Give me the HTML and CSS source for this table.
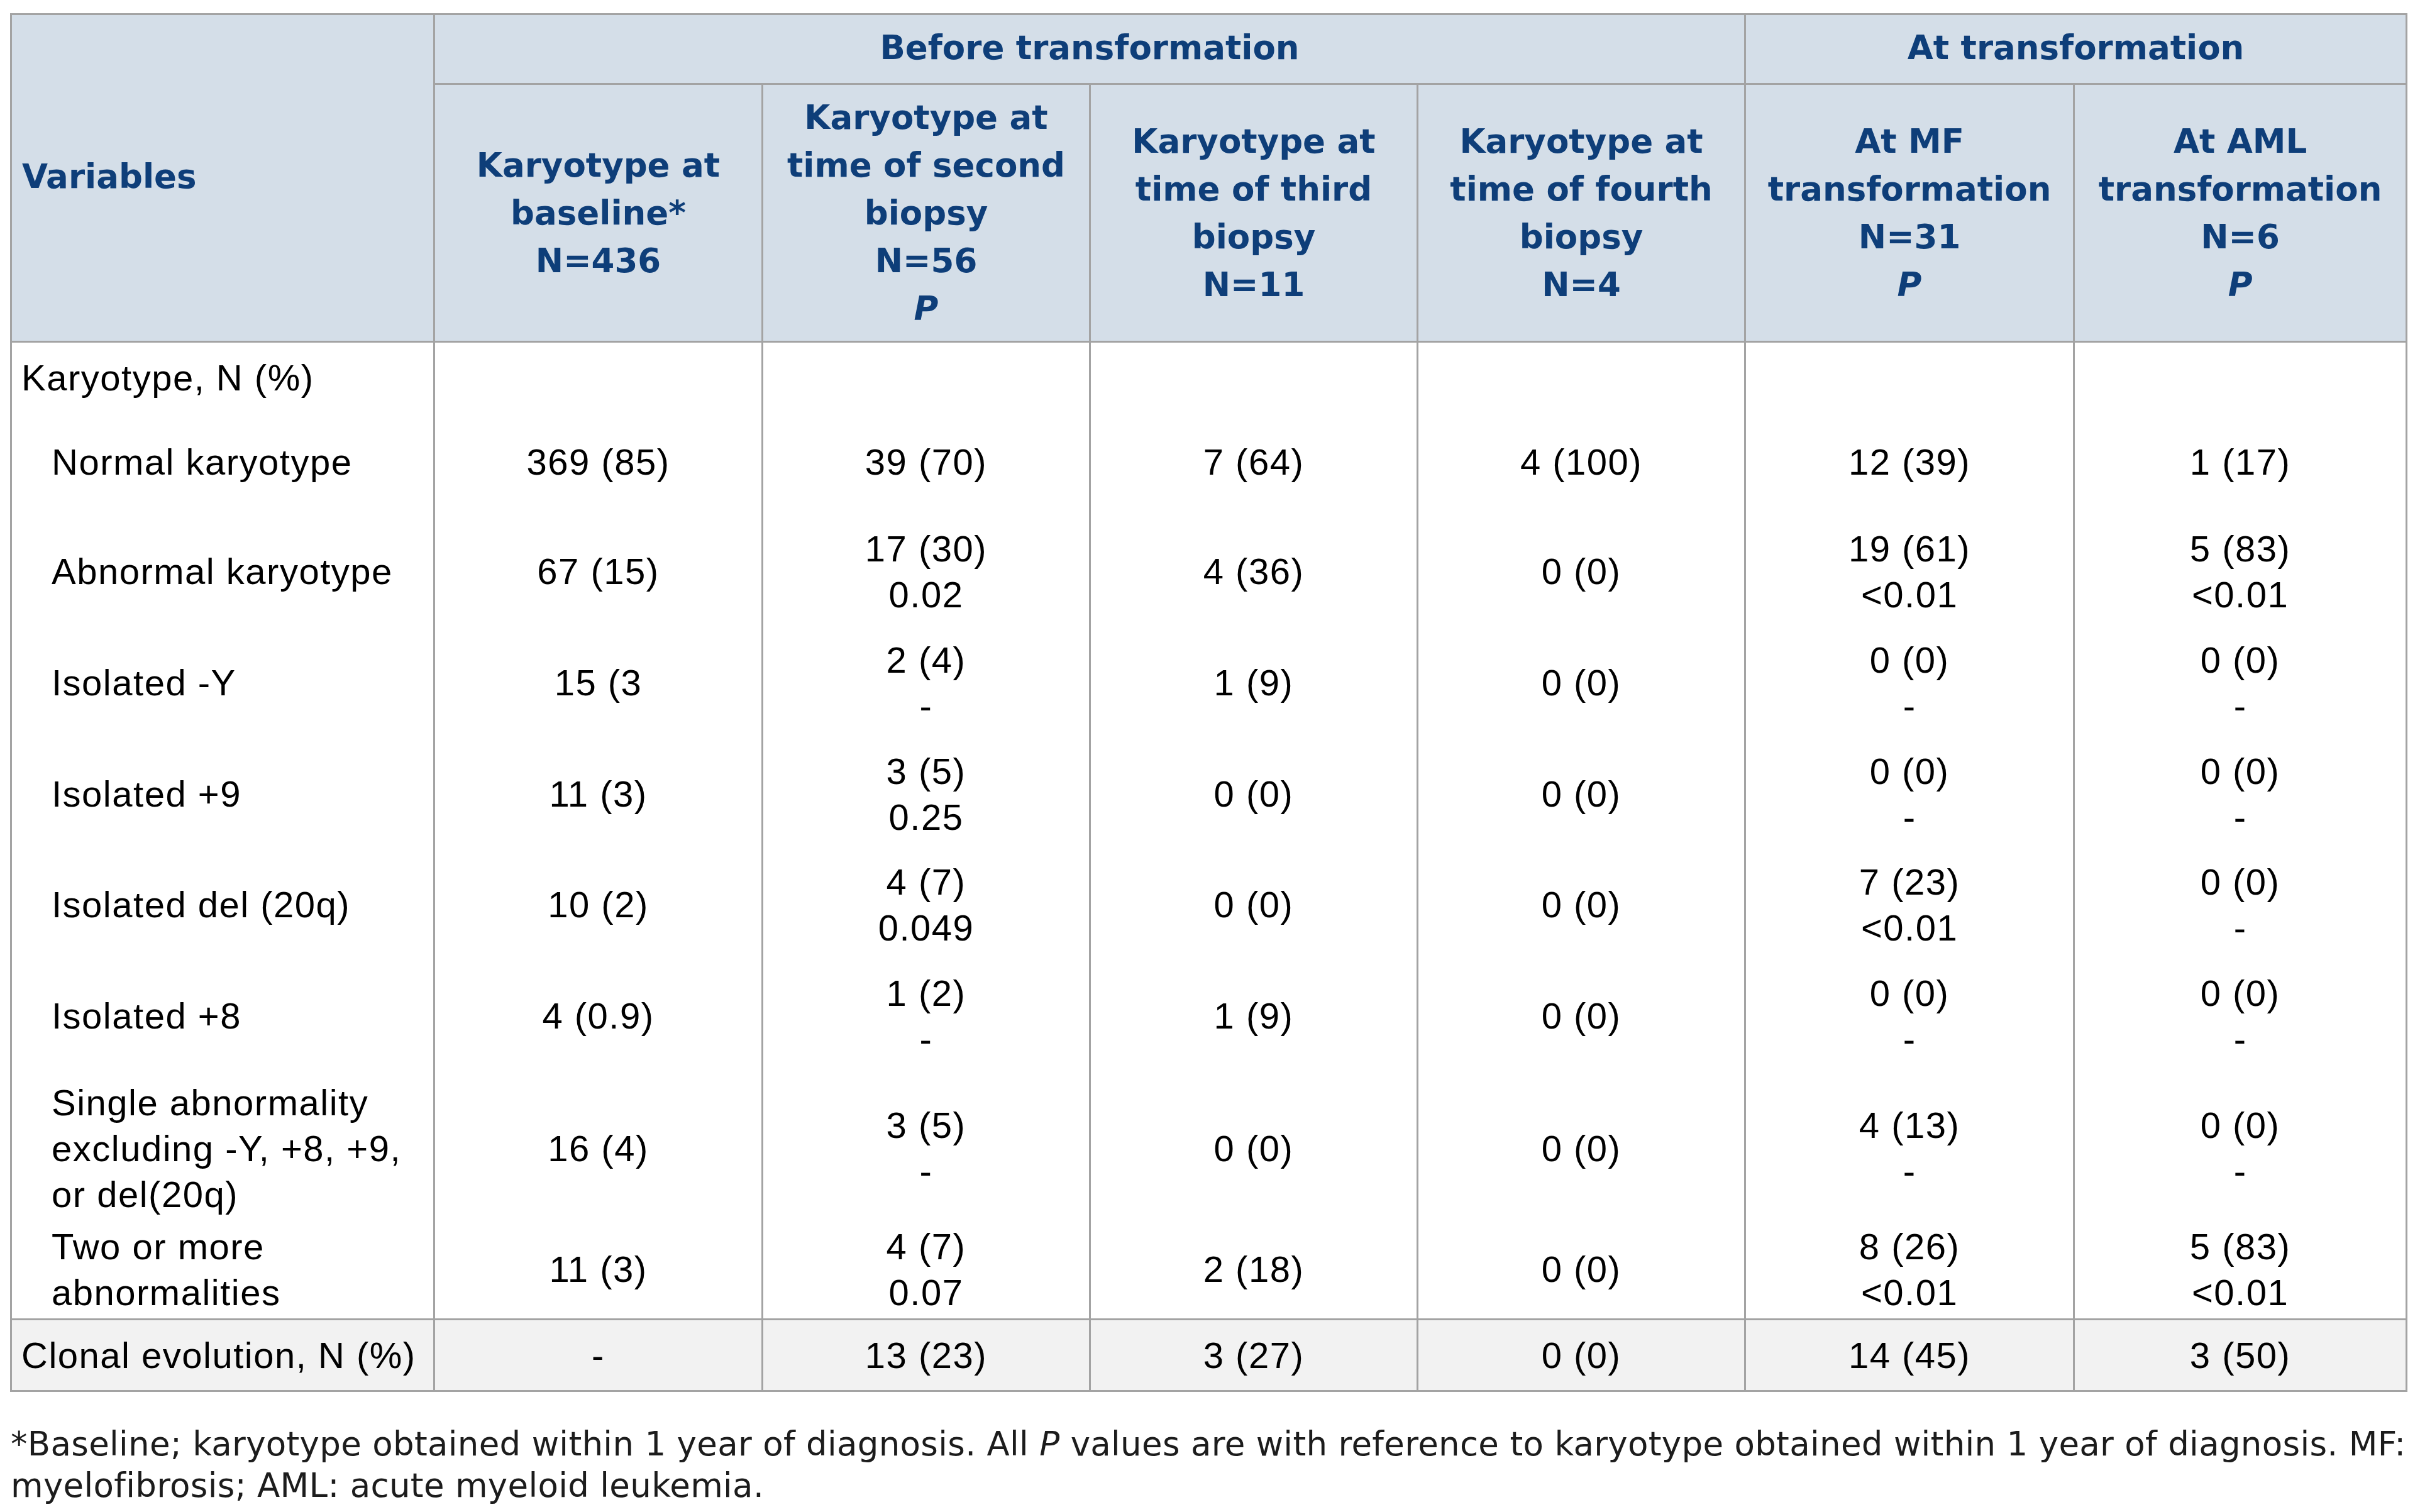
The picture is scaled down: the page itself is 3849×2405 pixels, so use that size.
FILE: index.html
```html
<!DOCTYPE html>
<html lang="en">
<head>
<meta charset="utf-8">
<title>Karyotype table</title>
<link rel="stylesheet" href="styles.css">
</head>
<body>
<div class="page">
<table class="kt">
  <colgroup>
    <col class="c0"><col class="c1"><col class="c2"><col class="c3"><col class="c4"><col class="c5"><col class="c6">
  </colgroup>
  <thead>
    <tr class="h1">
      <th rowspan="2" class="var">Variables</th>
      <th colspan="4">Before transformation</th>
      <th colspan="2">At transformation</th>
    </tr>
    <tr class="h2">
      <th>Karyotype at<br>baseline*<br>N=436</th>
      <th>Karyotype at<br>time of second<br>biopsy<br>N=56<br><i>P</i></th>
      <th>Karyotype at<br>time of third<br>biopsy<br>N=11</th>
      <th>Karyotype at<br>time of fourth<br>biopsy<br>N=4</th>
      <th>At MF<br>transformation<br>N=31<br><i>P</i></th>
      <th>At AML<br>transformation<br>N=6<br><i>P</i></th>
    </tr>
  </thead>
  <tbody>
    <tr class="r1">
      <td class="lab">Karyotype, N (%)</td><td></td><td></td><td></td><td></td><td></td><td></td>
    </tr>
    <tr class="r2">
      <td class="lab sub">Normal karyotype</td><td>369 (85)</td><td>39 (70)</td><td>7 (64)</td><td>4 (100)</td><td>12 (39)</td><td>1 (17)</td>
    </tr>
    <tr class="r3">
      <td class="lab sub">Abnormal karyotype</td><td>67 (15)</td><td>17 (30)<br>0.02</td><td>4 (36)</td><td>0 (0)</td><td>19 (61)<br>&lt;0.01</td><td>5 (83)<br>&lt;0.01</td>
    </tr>
    <tr class="r4">
      <td class="lab sub">Isolated -Y</td><td>15 (3</td><td>2 (4)<br>-</td><td>1 (9)</td><td>0 (0)</td><td>0 (0)<br>-</td><td>0 (0)<br>-</td>
    </tr>
    <tr class="r5">
      <td class="lab sub">Isolated +9</td><td>11 (3)</td><td>3 (5)<br>0.25</td><td>0 (0)</td><td>0 (0)</td><td>0 (0)<br>-</td><td>0 (0)<br>-</td>
    </tr>
    <tr class="r6">
      <td class="lab sub">Isolated del (20q)</td><td>10 (2)</td><td>4 (7)<br>0.049</td><td>0 (0)</td><td>0 (0)</td><td>7 (23)<br>&lt;0.01</td><td>0 (0)<br>-</td>
    </tr>
    <tr class="r7">
      <td class="lab sub">Isolated +8</td><td>4 (0.9)</td><td>1 (2)<br>-</td><td>1 (9)</td><td>0 (0)</td><td>0 (0)<br>-</td><td>0 (0)<br>-</td>
    </tr>
    <tr class="r8">
      <td class="lab sub">Single abnormality<br>excluding -Y, +8, +9,<br>or del(20q)</td><td>16 (4)</td><td>3 (5)<br>-</td><td>0 (0)</td><td>0 (0)</td><td>4 (13)<br>-</td><td>0 (0)<br>-</td>
    </tr>
    <tr class="r9">
      <td class="lab sub">Two or more<br>abnormalities</td><td>11 (3)</td><td>4 (7)<br>0.07</td><td>2 (18)</td><td>0 (0)</td><td>8 (26)<br>&lt;0.01</td><td>5 (83)<br>&lt;0.01</td>
    </tr>
    <tr class="clonal">
      <td class="lab">Clonal evolution, N (%)</td><td>-</td><td>13 (23)</td><td>3 (27)</td><td>0 (0)</td><td>14 (45)</td><td>3 (50)</td>
    </tr>
  </tbody>
</table>
<p class="note">*Baseline; karyotype obtained within 1 year of diagnosis. All <i>P</i> values are with reference to karyotype obtained within 1 year of diagnosis. MF:<br>myelofibrosis; AML: acute myeloid leukemia.</p>
</div>
</body>
</html>
```

FILE: styles.css
```css
html, body {
  margin: 0;
  padding: 0;
  background: #ffffff;
}

.page {
  padding: 21px 0 0 16px;
}

.kt {
  border-collapse: collapse;
  table-layout: fixed;
  width: 3812px;
  font-family: "Liberation Sans", Arial, sans-serif;
  font-size: 58px;
  line-height: 73px;
  letter-spacing: 1.5px;
  color: #000;
  border: 3px solid #a3a3a3;
}

.c0 { width: 673px; }
.c1 { width: 522px; }
.c2 { width: 521px; }
.c3 { width: 521px; }
.c4 { width: 521px; }
.c5 { width: 523px; }
.c6 { width: 529px; }

.kt th {
  background: #d4dee8;
  color: #0e3e79;
  font-family: "DejaVu Sans", sans-serif;
  font-weight: bold;
  font-size: 53px;
  line-height: 76px;
  letter-spacing: 0;
  text-align: center;
  vertical-align: middle;
  padding: 0;
  border: 3px solid #a3a3a3;
}

.kt th i {
  font-style: italic;
}

.kt th.var {
  text-align: left;
  padding-left: 16px;
}

.h1 { height: 111px; }
.h1 th { padding-bottom: 4px; }
.h2 { height: 410px; }

.kt td {
  text-align: center;
  vertical-align: middle;
  padding: 0;
  border-left: 3px solid #a3a3a3;
  border-right: 3px solid #a3a3a3;
}

.kt td.lab {
  text-align: left;
  padding-left: 15px;
}

.kt td.sub {
  padding-left: 63px;
}

.r1 { height: 112px; }
.r2 { height: 158px; }
.r3 { height: 190px; }
.r4 { height: 164px; }
.r5 { height: 190px; }
.r6 { height: 162px; }
.r7 { height: 192px; }
.r8 { height: 229px; }
.r9 { height: 158px; }

.clonal { height: 114px; }

.clonal td {
  background: #f2f2f2;
  border-top: 3px solid #a3a3a3;
  border-bottom: 3px solid #a3a3a3;
}

.note {
  margin: 50px 0 0 1px;
  font-family: "DejaVu Sans", sans-serif;
  font-size: 53px;
  line-height: 66px;
  letter-spacing: 0.3px;
  color: #1c1c1c;
  white-space: nowrap;
}
```
